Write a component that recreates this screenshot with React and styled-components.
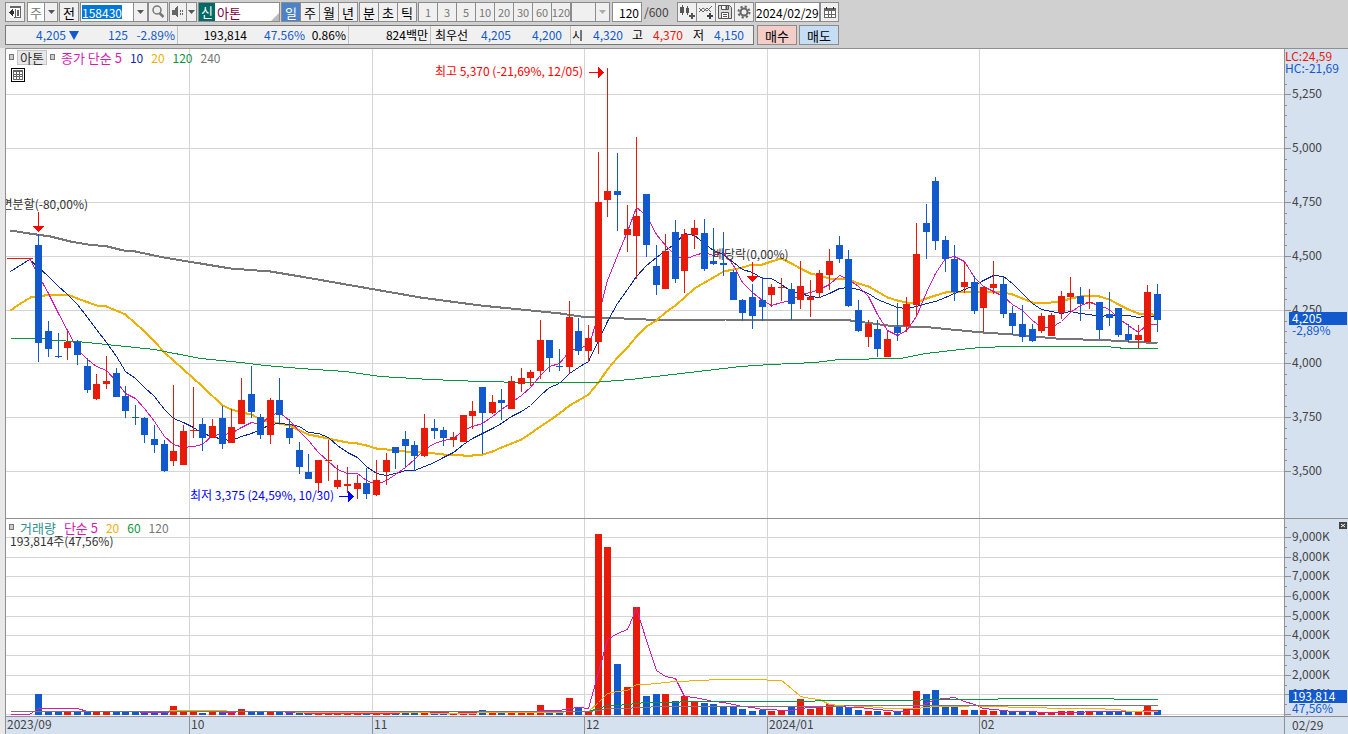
import * as React from "react";
import styled, { createGlobalStyle, css } from "styled-components";

const UP = "#e81a0a";
const DOWN = "#1159cc";
const MAGENTA = "#d91ab0";
const NAVY = "#0a2a9e";
const AMBER = "#f0b000";
const GREEN = "#0a963c";
const GRAY = "#767676";
const GRID = "#d5d5d5";
const LINE = "#909090";

const FONT = `"Noto Sans CJK KR", sans-serif`;

// origin of the plot and the distance between two sessions
const LEFT = 6;
const TOP = 49;
const VOLUME_TOP = 519;
const FIRST = 38.9;
const STEP = 9.643;
const VOLUME_BASE = 715;

// [up = 1 / down = 0, high, body top, body bottom, low, volume]
const candles = [
  [0, 234, 245, 343, 362, 21], [0, 321, 331, 349, 357, 4], [0, 333, 356, 357, 358, 4],
  [1, 331, 342, 348, 360, 4], [0, 340, 342, 355, 365, 4], [0, 358, 366, 390, 393, 4],
  [1, 374, 384, 399, 400, 4], [1, 356, 381, 384, 389, 4], [0, 368, 373, 397, 397, 4],
  [0, 386, 396, 411, 418, 3], [0, 405, 417, 418, 425, 3], [0, 417, 418, 435, 443, 2],
  [0, 425, 439, 445, 453, 3], [0, 440, 444, 471, 472, 3], [1, 385, 451, 461, 466, 9],
  [1, 425, 431, 465, 465, 4], [1, 387, 430, 431, 438, 4], [0, 418, 424, 438, 451, 2],
  [1, 419, 426, 438, 438, 4], [0, 406, 418, 444, 449, 3], [1, 409, 427, 443, 443, 3],
  [1, 378, 400, 424, 424, 6], [0, 366, 394, 412, 418, 3], [0, 414, 417, 435, 439, 3],
  [1, 398, 400, 435, 444, 3], [0, 378, 400, 415, 423, 3], [0, 419, 428, 438, 444, 2],
  [0, 442, 450, 467, 474, 2], [0, 454, 472, 479, 479, 2], [1, 460, 460, 483, 493, 2],
  [1, 440, 460, 461, 481, 2], [1, 465, 480, 487, 489, 2], [1, 467, 484, 486, 493, 2],
  [1, 475, 483, 489, 499, 2], [0, 468, 483, 494, 499, 2], [1, 460, 480, 495, 496, 1],
  [1, 453, 460, 472, 485, 4], [0, 447, 447, 453, 469, 3], [0, 431, 439, 446, 467, 3],
  [0, 441, 445, 456, 471, 2], [1, 414, 428, 456, 457, 3], [0, 419, 428, 431, 439, 3],
  [0, 427, 430, 438, 446, 2], [1, 432, 437, 440, 447, 2], [1, 415, 415, 442, 442, 3],
  [1, 401, 411, 416, 429, 4], [0, 387, 387, 413, 454, 5], [1, 395, 402, 413, 414, 3],
  [0, 389, 400, 403, 420, 3], [1, 376, 381, 409, 409, 4], [1, 368, 378, 384, 392, 3],
  [1, 370, 372, 378, 386, 3], [1, 320, 340, 371, 379, 10], [0, 340, 340, 358, 372, 4],
  [0, 349, 366, 367, 371, 3], [1, 301, 317, 367, 373, 17], [0, 318, 331, 351, 355, 8],
  [1, 325, 338, 351, 362, 4], [1, 152, 202, 342, 354, 181], [1, 68, 191, 200, 217, 168],
  [0, 153, 191, 195, 231, 51], [1, 205, 229, 235, 252, 28], [1, 137, 216, 236, 279, 108],
  [0, 194, 194, 245, 257, 19], [0, 245, 266, 285, 295, 21], [1, 234, 251, 289, 289, 21],
  [0, 220, 232, 279, 283, 14], [1, 229, 234, 271, 293, 19], [1, 220, 228, 235, 249, 13],
  [0, 219, 233, 269, 271, 12], [0, 228, 261, 264, 265, 11], [0, 232, 263, 265, 276, 8],
  [0, 270, 272, 300, 300, 9], [0, 299, 300, 313, 321, 6], [0, 284, 297, 316, 329, 4],
  [0, 277, 300, 307, 321, 5], [1, 284, 287, 295, 307, 4], [1, 278, 287, 288, 301, 4],
  [0, 283, 289, 304, 320, 8], [1, 261, 286, 300, 309, 16], [1, 280, 297, 300, 317, 6],
  [1, 270, 273, 293, 298, 8], [1, 249, 261, 275, 290, 11], [0, 236, 245, 259, 263, 9],
  [0, 250, 259, 306, 307, 8], [0, 300, 310, 331, 332, 5], [1, 320, 324, 337, 347, 4],
  [0, 320, 329, 349, 357, 4], [1, 331, 339, 357, 357, 3], [0, 303, 327, 333, 341, 4],
  [1, 297, 304, 326, 332, 6], [1, 223, 254, 305, 316, 24], [0, 204, 223, 232, 259, 21],
  [0, 177, 181, 241, 250, 25], [0, 236, 240, 259, 272, 9], [0, 245, 259, 292, 301, 9],
  [1, 262, 282, 287, 293, 5], [0, 276, 282, 311, 314, 5], [1, 287, 287, 308, 332, 5],
  [1, 261, 284, 288, 294, 4], [0, 277, 284, 314, 318, 4], [0, 306, 313, 326, 335, 4],
  [0, 305, 324, 337, 342, 4], [0, 324, 329, 341, 342, 3], [1, 313, 316, 331, 333, 2],
  [1, 313, 315, 336, 336, 3], [1, 291, 296, 313, 319, 4], [1, 277, 293, 297, 311, 4],
  [0, 287, 296, 304, 321, 4], [1, 289, 302, 303, 309, 4], [0, 302, 302, 330, 339, 4],
  [0, 292, 314, 318, 326, 4], [0, 308, 308, 335, 337, 4], [0, 324, 334, 340, 342, 3],
  [1, 325, 335, 340, 348, 3], [1, 285, 292, 342, 342, 9], [0, 284, 294, 320, 332, 5],
];

const xOf = (i) => Math.floor(FIRST + i * STEP);

// simple moving average, sessions before the first one count as `before`
const average = (values, period, before, from = 0) =>
  values
    .map((_, i) => {
      let sum = 0;
      for (let k = i - period + 1; k <= i; k++) sum += k < 0 ? before : values[k];
      return [xOf(i), Math.round(sum / period)];
    })
    .slice(from);

const toPoints = (list) => list.map((p) => p.join(",")).join(" ");

const closes = candles.map((c) => (c[0] ? c[2] : c[3]));
const volumes = candles.map((c) => c[5]);
const volumeAverage = (period) =>
  [10, 29]
    .map((x) => [x, period === 5 ? 714 : VOLUME_BASE - 4])
    .concat(average(volumes, period, period > 20 ? 4 : 3).map(([x, y]) => [x, VOLUME_BASE - y]));

const ma5 = [[10, 258], [29, 258], ...average(closes, 5, 258)];
const ma10 = [[10, 271], [29, 259], ...average(closes, 10, 258)];
const ma20 = [
  [10, 310], [20, 303], [30, 297], [38, 296], [50, 294], [67, 294], [77, 298], [96, 305],
  [106, 306], [125, 314], [144, 331], [154, 341], [164, 352], [183, 369], [202, 386],
  ...average(closes, 20, 296, 19),
];
const ma120 = [
  [10, 338], [43, 338], [53, 340], [77, 341], [106, 344], [154, 349], [200, 358], [240, 362],
  [265, 365], [300, 368], [345, 371], [380, 376], [430, 379], [480, 381], [525, 382],
  [592, 382], [630, 379], [672, 374], [740, 366], [770, 364], [815, 362], [838, 359],
  [900, 358], [925, 353], [960, 349], [980, 347], [1010, 346], [1105, 346], [1125, 348],
  [1157, 348],
];
const ma240 = [
  [10, 230], [29, 233], [50, 236], [70, 241], [87, 244], [107, 246], [123, 250], [135, 251],
  [163, 257], [200, 263], [230, 268], [270, 271], [300, 276], [340, 283], [380, 290],
  [420, 297], [450, 301], [480, 305], [530, 310], [560, 313], [580, 316], [645, 319],
  [680, 320], [725, 319], [785, 319], [850, 320], [887, 325], [930, 327], [982, 332],
  [1012, 334], [1055, 338], [1110, 340], [1145, 342], [1157, 343],
];

const months = [
  [189, "10"],
  [372, "11"],
  [584, "12"],
  [767, "2024/01"],
  [979, "02"],
];

const priceTicks = [
  [94, "5,250"], [148, "5,000"], [202, "4,750"], [256, "4,500"],
  [310, "4,250"], [363, "4,000"], [417, "3,750"], [471, "3,500"],
];

const volumeTicks = [
  [537, "9,000K"], [557, "8,000K"], [576, "7,000K"], [596, "6,000K"], [616, "5,000K"],
  [635, "4,000K"], [655, "3,000K"], [675, "2,000K"], [694, "1,000K"], [714, ""],
];

const Grid = ({ ticks }) => (
  <g fill={GRID}>
    {ticks.map(([y]) => (
      <rect key={y} x={LEFT} y={y} width="100%" height="1" />
    ))}
    {months.map(([x]) => (
      <rect key={x} x={x} y="0" width="1" height="900" />
    ))}
  </g>
);

const Line = ({ points, color, width = 1 }) => (
  <polyline
    points={toPoints(points)}
    fill="none"
    stroke={color}
    strokeWidth={width}
    transform="translate(0.5 0.5)"
  />
);

const PriceChart = () => (
  <Plot $height={469} role="img" aria-label="아톤 일봉 차트">
    <g transform={`translate(${-LEFT} ${-TOP})`} shapeRendering="crispEdges">
      <Grid ticks={priceTicks} />
      <Line points={ma240} color={GRAY} width={2} />
      <Line points={ma20} color={AMBER} width={2} />
      <Line points={ma120} color={GREEN} />
      <Line points={ma10} color={NAVY} />
      <Line points={ma5} color={MAGENTA} />
      <rect x="7" y="258" width="26" height="1" fill={UP} />
      {candles.map(([up, high, top, bottom, low], i) => (
        <g key={i} fill={up ? UP : DOWN}>
          <rect x={xOf(i)} y={high} width="1" height={low - high} />
          <rect x={xOf(i) - 3} y={top} width="7" height={bottom - top} />
        </g>
      ))}
      <g fill="#f00">
        <rect x="38" y="212" width="1" height="14" />
        <path d="M33 226h11l-5.5 6z" />
        <rect x="752" y="262" width="1" height="14" />
        <path d="M747 276h11l-5.5 6z" />
        <rect x="589" y="72" width="9" height="1" />
        <path d="M598 67v11l6-5.5z" />
      </g>
      <g fill="#00f">
        <rect x="339" y="496" width="9" height="1" />
        <path d="M348 491v11l6-5.5z" />
      </g>
      <Note x="88" y="209" textAnchor="end">면분할(-80,00%)</Note>
      <Note x="713" y="259">배당락(0,00%)</Note>
      <Note x="583" y="76" textAnchor="end" fill="#f00">최고 5,370 (-21,69%, 12/05)</Note>
      <Note x="334" y="500" textAnchor="end" fill="#00f">최저 3,375 (24,59%, 10/30)</Note>
    </g>
  </Plot>
);

const VolumeChart = () => (
  <Plot $height={197} role="img" aria-label="거래량 차트">
    <g transform={`translate(${-LEFT} ${-VOLUME_TOP})`} shapeRendering="crispEdges">
      <Grid ticks={volumeTicks} />
      {candles.map((c, i) => (
        <rect
          key={i}
          x={xOf(i) - 3}
          y={VOLUME_BASE - c[5]}
          width="7"
          height={c[5]}
          fill={c[0] ? UP : DOWN}
        />
      ))}
      <Line points={volumeAverage(5)} color={MAGENTA} />
      <Line points={volumeAverage(20)} color={AMBER} />
      <Line points={volumeAverage(60)} color={GREEN} />
      <Line points={volumeAverage(120)} color={GRAY} />
    </g>
  </Plot>
);

const Scale = ({ top, height, ticks, minor, children }) => (
  <Plot $height={height}>
    <g transform={`translate(-1285 ${-top})`} shapeRendering="crispEdges">
      {minor.map((y) => (
        <rect key={y} x="1285" y={y} width="2" height="1" fill={LINE} />
      ))}
      {ticks.map(([y, label]) => (
        <g key={y}>
          <rect x="1285" y={y} width="6" height="1" fill={LINE} />
          <ScaleText x="1292" y={y + 4}>{label}</ScaleText>
        </g>
      ))}
      {children}
    </g>
  </Plot>
);

const priceMinor = [84];
priceTicks.slice(0, -1).forEach(([y]) => [11, 21, 32, 43].forEach((d) => priceMinor.push(y + d)));
const volumeMinor = [527, ...volumeTicks.slice(0, -1).map(([y]) => y + 10)];

const App = () => {
  const [period, setPeriod] = React.useState("일");

  return (
    <Page>
      <GlobalStyle />
      <Header>
        <Row>
          <Tool aria-label="창 전환">
            <svg width="14" height="14" viewBox="0 0 14 14" shapeRendering="crispEdges">
              <path d="M2 1h11v12H2z" fill="#fff" />
              <path d="M2 1h11v2H2zM12 3h1v10h-1zM6 12h7v1H6zM7 4h1v8H7zM9 5h2v6H9z" fill="#666" />
              <path d="M1 7l4-4v3h1v3H5v3z" fill="#333" />
            </svg>
          </Tool>
          <Gap $w={2} />
          <Field $w={18}>
            <Select aria-label="종목 구분" $color="#777" defaultValue="주">
              <option>주</option>
            </Select>
          </Field>
          <Arrow $w={13} />
          <Gap $w={1} />
          <Tool>전</Tool>
          <Gap $w={1} />
          <Field $w={54}>
            <CodeInput aria-label="종목코드" defaultValue="158430" />
          </Field>
          <Arrow />
          <Tool aria-label="검색">
            <svg width="14" height="14" viewBox="0 0 14 14">
              <circle cx="6" cy="5" r="4" fill="#eee" stroke="#777" strokeWidth="1.5" />
              <path d="M8.500 8l4 4" stroke="#777" strokeWidth="2.500" />
            </svg>
          </Tool>
          <Gap $w={1} />
          <Tool $w={18} aria-label="소리">
            <svg width="14" height="12" viewBox="0 0 14 12" shapeRendering="crispEdges">
              <path d="M1 4h3V2l3-2v12L4 9H1z" fill="#666" />
              <path d="M9 4h1v2H9zM11 4h1v2h-1zM9 7h1v2H9zM11 7h1v2h-1z" fill="#666" />
            </svg>
          </Tool>
          <Arrow $w={10} />
          <Gap $w={1} />
          <Field $w={82}>
            <Badge>신</Badge>
            <StockName>아톤</StockName>
            <Corner />
          </Field>
          <Gap $w={1} />
          {["일", "주", "월", "년"].map((p) => (
            <Tab key={p} $active={p === period} onClick={() => setPeriod(p)}>{p}</Tab>
          ))}
          <Gap $w={1} />
          {["분", "초", "틱"].map((p) => (
            <Tab key={p} $active={p === period} onClick={() => setPeriod(p)}>{p}</Tab>
          ))}
          <Gap $w={1} />
          {["1", "3", "5", "10", "20", "30", "60", "120"].map((m) => (
            <Tab key={m} $muted>{m}</Tab>
          ))}
          <Field $w={25} $off>
            <Select aria-label="주기" disabled />
          </Field>
          <Arrow $w={14} $off />
          <Gap $w={2} />
          <Field $w={30}>
            <CountInput aria-label="표시 봉 수" defaultValue="120" />
          </Field>
          <Total>/600</Total>
          <Tool aria-label="봉 추가">
            <svg width="16" height="16" viewBox="0 0 16 16" shapeRendering="crispEdges">
              <path d="M1 3h4v6H1zM3 1h1v10H3zM7 4h3v5H7zM8 2h1v9H8zM10 11h6v2h-6zM12 9h2v6h-2z" fill="#555" />
            </svg>
          </Tool>
          <Tool aria-label="지표 추가">
            <svg width="16" height="16" viewBox="0 0 16 16">
              <path d="M1 8l4-4 4 3 5-5M1 4l4 4 4-4 4 4" stroke="#666" fill="none" />
              <path d="M9 11h6v2H9zM11 9h2v6h-2z" fill="#444" />
            </svg>
          </Tool>
          <Tool aria-label="저장">
            <svg width="16" height="16" viewBox="0 0 16 16">
              <path d="M1.500 1.500h11l2 2v11h-13z" fill="#ddd" stroke="#555" />
              <path d="M4.500 1.500h7v4h-7zM4.500 8.500h7v6h-7z" fill="#fff" stroke="#555" />
              <path d="M9 2h1v3H9zM6 10.500h4M6 12.500h4" fill="#555" stroke="#555" />
            </svg>
          </Tool>
          <Tool aria-label="설정">
            <svg width="14" height="14" viewBox="0 0 14 14">
              <circle cx="7" cy="7" r="3.500" fill="none" stroke="#666" strokeWidth="2" />
              <circle cx="7" cy="7" r="5.500" fill="none" stroke="#666" strokeWidth="2" strokeDasharray="2.200 2.120" />
            </svg>
          </Tool>
          <Gap $w={1} />
          <Field $w={65}>
            <DateInput aria-label="기준일" defaultValue="2024/02/29" />
          </Field>
          <Tool $w={19} aria-label="달력">
            <svg width="12" height="11" viewBox="0 0 12 11" shapeRendering="crispEdges">
              <path d="M0 1h12v10H0z" fill="#666" />
              <path d="M2 0h1v2H2zM9 0h1v2H9z" fill="#222" />
              <path d="M1 4h3v3H1zM5 4h2v3H5zM8 4h3v3H8zM1 8h3v2H1zM5 8h2v2H5zM8 8h3v2H8z" fill="#fff" />
            </svg>
          </Tool>
        </Row>

        <Row>
          <Quote>
            <Cell $w={171}>
              <Value $w={60} $color={DOWN}>4,205</Value>
              <Triangle viewBox="0 0 10 9"><path d="M0 0h10L5 9z" fill={DOWN} /></Triangle>
              <Value $w={49} $color={DOWN}>125</Value>
              <Value $w={47} $color={DOWN}>-2.89%</Value>
            </Cell>
            <Cell $w={171}>
              <Value $w={69}>193,814</Value>
              <Value $w={58} $color={DOWN}>47.56%</Value>
              <Value $w={41}>0.86%</Value>
            </Cell>
            <Cell $w={82}>
              <Value $w={79}>824백만</Value>
            </Cell>
            <Cell $w={140}>
              <Value $w={37}>최우선</Value>
              <Value $w={43} $color={DOWN}>4,205</Value>
              <Value $w={51} $color={DOWN}>4,200</Value>
            </Cell>
            <Cell $w={183}>
              <Value $w={12}>시</Value>
              <Value $w={40} $color={DOWN}>4,320</Value>
              <Value $w={20}>고</Value>
              <Value $w={40} $color={UP}>4,370</Value>
              <Value $w={21}>저</Value>
              <Value $w={40} $color={DOWN}>4,150</Value>
            </Cell>
          </Quote>
          <Gap $w={3} />
          <Trade $bg="#f4cdc8">매수</Trade>
          <Gap $w={2} />
          <Trade $bg="#c5def5">매도</Trade>
        </Row>
      </Header>

      <Chart>
        <Panel>
          <PriceChart />
          <Legend>
            <Marker />
            <NameButton>아톤</NameButton>
            <Marker />
            <Name $color={MAGENTA}>종가 단순 5</Name>
            <Key $color={NAVY}>10</Key>
            <Key $color={AMBER}>20</Key>
            <Key $color={GREEN}>120</Key>
            <Key $color={GRAY}>240</Key>
          </Legend>
          <TableButton aria-label="표 보기">
            <svg width="10" height="10" viewBox="0 0 10 10" shapeRendering="crispEdges">
              <path d="M0 0h10v10H0z" fill="#666" />
              <path d="M1 2h2v2H1zM4 2h2v2H4zM7 2h2v2H7zM1 5h2v1H1zM4 5h2v1H4zM7 5h2v1H7zM1 7h2v2H1zM4 7h2v2H4zM7 7h2v2H7z" fill="#fff" />
            </svg>
          </TableButton>
        </Panel>
        <ScalePanel>
          <Scale top={TOP} height={469} ticks={priceTicks} minor={priceMinor}>
            <ScaleText x="1285" y="61" fill={UP}>LC:24,59</ScaleText>
            <ScaleText x="1285" y="73" fill={DOWN}>HC:-21,69</ScaleText>
            <rect x="1289" y="312" width="58" height="13" fill={DOWN} />
            <ScaleText x="1292" y="323" fill="#fff">4,205</ScaleText>
            <ScaleText x="1292" y="335" fill={DOWN}>-2,89%</ScaleText>
          </Scale>
        </ScalePanel>

        <Panel>
          <VolumeChart />
          <Legend>
            <Marker />
            <Name $color="#2f8f8f">거래량</Name>
            <Name $color={MAGENTA}>단순 5</Name>
            <Key $color={AMBER}>20</Key>
            <Key $color={GREEN}>60</Key>
            <Key $color={GRAY}>120</Key>
          </Legend>
          <VolumeNow>193,814주(47,56%)</VolumeNow>
        </Panel>
        <ScalePanel>
          <Scale top={VOLUME_TOP} height={197} ticks={volumeTicks} minor={volumeMinor}>
            <rect x="1289" y="690" width="58" height="13" fill={DOWN} />
            <ScaleText x="1292" y="701" fill="#fff">193,814</ScaleText>
            <ScaleText x="1292" y="713" fill={DOWN}>47,56%</ScaleText>
          </Scale>
          <Close aria-label="닫기">
            <svg width="8" height="7" viewBox="0 0 8 7">
              <path d="M2 2l4 3M6 2L2 5" stroke="#fff" />
            </svg>
          </Close>
        </ScalePanel>

        <DateAxis>
          <Plot $height={17}>
            <g transform={`translate(${-LEFT} 0)`} shapeRendering="crispEdges">
              <ScaleText x="7" y="12">2023/09</ScaleText>
              {months.map(([x, label]) => (
                <g key={x}>
                  <rect x={x} y="0" width="1" height="17" fill={LINE} />
                  <ScaleText x={x + 2} y="12">{label}</ScaleText>
                </g>
              ))}
            </g>
          </Plot>
        </DateAxis>
        <LastDate>02/29</LastDate>
      </Chart>
    </Page>
  );
};

const Arrow = ({ $w = 14, $off }) => (
  <ArrowButton $w={$w} disabled={$off} aria-label="목록 열기">
    <svg width="7" height="4" viewBox="0 0 7 4">
      <path d="M0 0h7L3.500 4z" fill={$off ? "#aaa" : "#555"} />
    </svg>
  </ArrowButton>
);

const GlobalStyle = createGlobalStyle`
  * {
    box-sizing: border-box;
  }

  body {
    margin: 0;
    background: #e8e8e8;
    font-family: ${FONT};
    font-size: 13px;
    color: #000;
  }

  button, input, select {
    font: inherit;
    color: inherit;
    margin: 0;
    padding: 0;
    border: 0;
    border-radius: 0;
    outline: 0;
  }
`;

const Page = styled.div`
  display: flex;
  flex-direction: column;
  min-height: 100vh;
  overflow: hidden;
`;

const Header = styled.header`
  display: flex;
  flex-direction: column;
  gap: 3px;
  padding: 2px 0 3px 5px;
  background: #d0d0d0;
`;

const Row = styled.div`
  display: flex;
  height: 20px;
`;

const Gap = styled.span`
  flex: none;
  width: ${(p) => p.$w}px;
`;

const boxed = css`
  flex: none;
  display: flex;
  align-items: center;
  justify-content: center;
  height: 20px;
  border: 1px solid #8c8c8c;
`;

const Tool = styled.button`
  ${boxed}
  width: ${(p) => p.$w || 20}px;
  background: #f0f0f0;

  & + & {
    width: 19px;
    border-left: 0;
  }
`;

const ArrowButton = styled.button`
  ${boxed}
  width: ${(p) => p.$w}px;
  border-left: 0;
  background: #f0f0f0;
`;

const Field = styled.div`
  ${boxed}
  justify-content: flex-start;
  width: ${(p) => p.$w}px;
  background: ${(p) => (p.$off ? "#f0f0f0" : "#fff")};
`;

const Select = styled.select`
  appearance: none;
  width: 100%;
  height: 18px;
  padding-left: 2px;
  background: none;
  color: ${(p) => p.$color || "#000"};
`;

const CodeInput = styled.input`
  width: 40px;
  height: 14px;
  margin-left: 1px;
  background: #0078d7;
  color: #fff;
  font-size: 12px;
`;

const CountInput = styled.input`
  width: 26px;
  height: 18px;
  text-align: right;
  background: none;
  font-size: 12px;
`;

const DateInput = styled.input`
  width: 100%;
  height: 18px;
  background: none;
  font-size: 12px;
`;

const Badge = styled.span`
  width: 16px;
  height: 18px;
  line-height: 18px;
  text-align: center;
  background: #006a64;
  color: #fff;
`;

const StockName = styled.span`
  flex: 1;
  padding-left: 2px;
  color: #800040;
`;

const Corner = styled.i`
  align-self: flex-end;
  border-left: 8px solid transparent;
  border-bottom: 8px solid #bbb;
`;

const Tab = styled.button`
  ${boxed}
  width: 20px;
  background: ${(p) => (p.$active ? "#4d82c8" : "#f0f0f0")};
  color: ${(p) => (p.$active ? "#fff" : p.$muted ? "#777" : "#000")};
  font-size: ${(p) => (p.$muted ? 11 : 13)}px;

  & + & {
    width: 19px;
    border-left: 0;
  }
`;

const Total = styled.span`
  flex: none;
  width: 35px;
  padding-left: 2px;
  line-height: 20px;
  font-size: 12px;
  color: #444;
`;

const Quote = styled.div`
  display: flex;
  height: 20px;
  border: 1px solid #777;
  background: #f0f0f0;
`;

const Cell = styled.div`
  flex: none;
  display: flex;
  align-items: center;
  width: ${(p) => p.$w}px;

  & + & {
    border-left: 1px solid #c0c0c0;
  }
`;

const Value = styled.span`
  flex: none;
  width: ${(p) => p.$w}px;
  line-height: 18px;
  text-align: right;
  white-space: nowrap;
  font-size: 12px;
  color: ${(p) => p.$color || "#000"};
`;

const Triangle = styled.svg`
  flex: none;
  width: 10px;
  height: 9px;
  margin-left: 3px;
`;

const Trade = styled.button`
  ${boxed}
  width: 40px;
  background: ${(p) => p.$bg};
`;

const Chart = styled.main`
  display: grid;
  grid-template-columns: minmax(0, 1fr) 64px;
  flex: 1;
  align-content: start;
  margin-left: 5px;
  border-top: 1px solid ${LINE};
  border-left: 1px solid ${LINE};
`;

const Panel = styled.section`
  position: relative;
  background: #fff;
  border-bottom: 1px solid ${LINE};
`;

const ScalePanel = styled.aside`
  position: relative;
  background: #d6e1f0;
  border-left: 1px solid ${LINE};
  border-bottom: 1px solid ${LINE};
`;

const Plot = styled.svg`
  display: block;
  width: 100%;
  height: ${(p) => p.$height}px;
`;

const Note = styled.text`
  fill: ${(p) => p.fill || "#333"};
  font-size: 12px;
`;

const ScaleText = styled.text`
  fill: ${(p) => p.fill || "#444"};
  font-size: 12px;
`;

const Legend = styled.div`
  position: absolute;
  top: 0;
  left: 3px;
  display: flex;
  align-items: center;
  height: 16px;
`;

const Marker = styled.i`
  width: 5px;
  height: 6px;
  border: 1px solid #777;
  background: #ccc;
`;

const NameButton = styled.button`
  width: 30px;
  height: 15px;
  margin: 0 3px;
  border: 1px solid #c4c4c4;
  background: #e8e8e8;
  line-height: 13px;
  color: #333;
`;

const Key = styled.span`
  margin-left: 8px;
  line-height: 15px;
  white-space: nowrap;
  font-size: 12px;
  color: ${(p) => p.$color};
`;

const Name = styled(Key)`
  font-size: 13px;

  ${Marker} + & {
    margin-left: 6px;
  }
`;

const TableButton = styled.button`
  position: absolute;
  top: 19px;
  left: 5px;
  display: flex;
  align-items: center;
  justify-content: center;
  width: 14px;
  height: 14px;
  border: 1px solid #000;
  background: #fff;
`;

const VolumeNow = styled.p`
  position: absolute;
  top: 14px;
  left: 4px;
  margin: 0;
  line-height: 15px;
  font-size: 12px;
  color: #333;
`;

const Close = styled.button`
  position: absolute;
  top: 3px;
  right: 1px;
  display: flex;
  width: 8px;
  height: 7px;
  background: #444;
`;

const DateAxis = styled.div`
  height: 17px;
  background: #d6e1f0;
`;

const LastDate = styled.div`
  padding-left: 7px;
  border-left: 1px solid ${LINE};
  background: #d6e1f0;
  line-height: 15px;
  font-size: 12px;
  color: #444;
`;

export default App;
